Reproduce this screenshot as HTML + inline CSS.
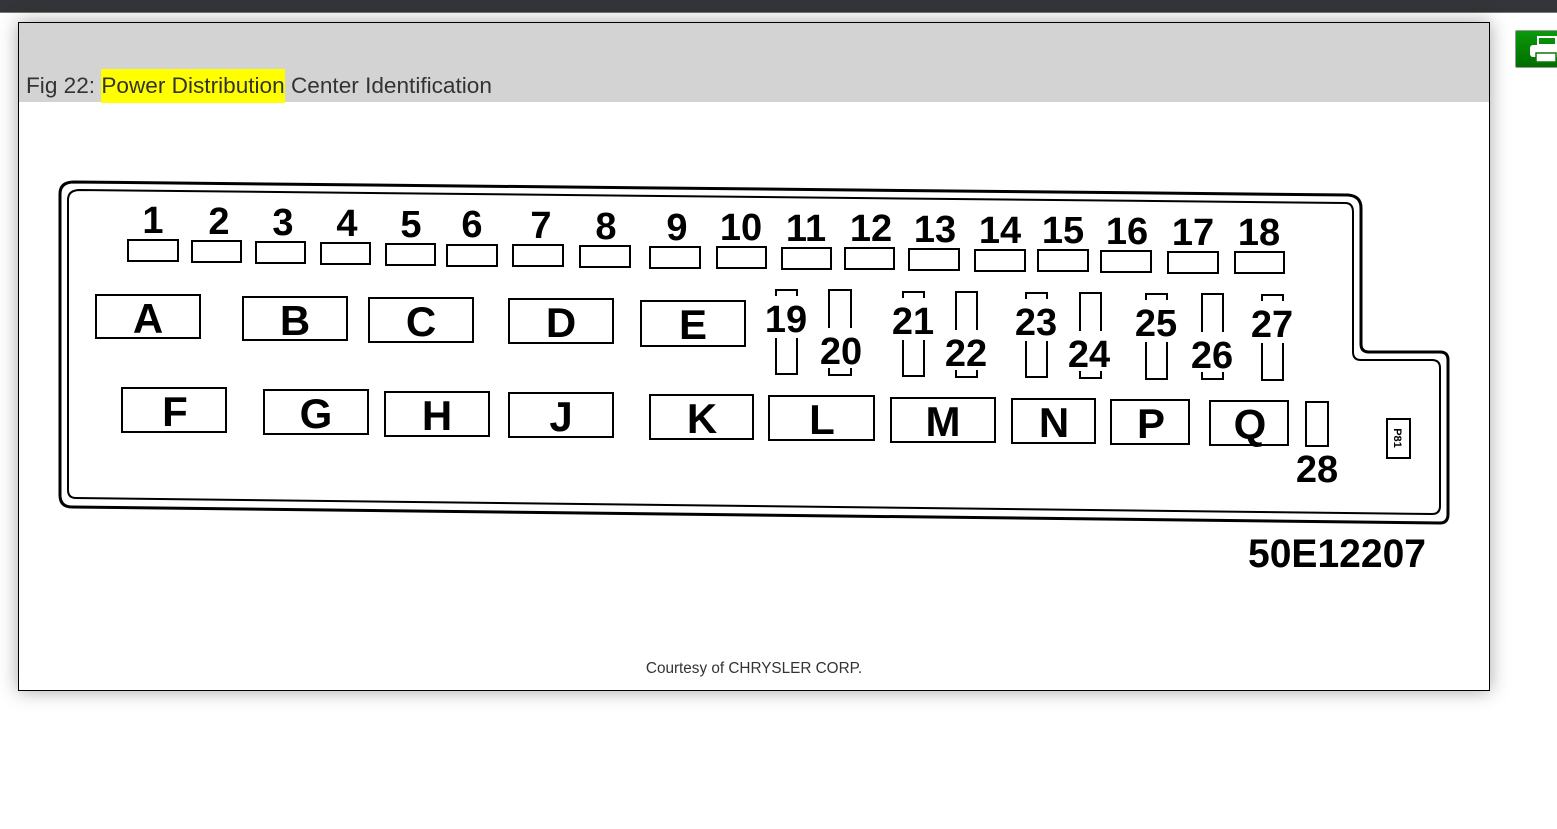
<!DOCTYPE html>
<html><head><meta charset="utf-8"><style>
html,body{margin:0;padding:0;width:1557px;height:829px;background:#fff;overflow:hidden;font-family:"Liberation Sans",sans-serif}
#top{position:absolute;left:0;top:0;width:1557px;height:12px;background:#333538;border-bottom:1px solid #777}
#panel{position:absolute;left:18px;top:22px;width:1470px;height:667px;border:1px solid #000;background:#fff;box-shadow:0 0 18px rgba(0,0,0,.35)}
#hdr{position:absolute;left:0;top:0;width:1470px;height:79px;background:#d3d3d3}
#title{position:absolute;left:7px;top:50px;font-size:22.6px;color:#333;white-space:nowrap;line-height:26px}
#title span{background:#ffff00;padding:4px 0 5px}
#cour{position:absolute;left:0;width:1470px;top:637px;text-align:center;font-size:15.3px;color:#333}
#print{position:absolute;left:1515px;top:30px;width:44px;height:36px;background:linear-gradient(#0a9a0a,#006d00);border:1px solid #999;border-radius:2px}
svg{position:absolute;left:0;top:0}
</style></head><body>
<div id="top"></div>
<div id="panel"><div id="hdr"></div>
<div id="title">Fig 22: <span>Power Distribution</span> Center Identification</div>
<div id="cour">Courtesy of CHRYSLER CORP.</div></div>
<div id="print"><svg width="44" height="36" style="position:absolute;left:0;top:0"><rect x="22" y="6" width="18" height="8" fill="none" stroke="#fff" stroke-width="2"/><rect x="14" y="14" width="30" height="12" rx="3" fill="#fff"/><rect x="20" y="22" width="20" height="9" fill="#fff" stroke="#0a7a0a" stroke-width="1.5"/></svg></div>
<svg width="1557" height="829" font-family="Liberation Sans" font-weight="bold" fill="#000">
<g fill="none" stroke="#000">
<path d="M74,182 L1348,195 Q1361,196 1361,208 L1361,344 Q1361,352 1369,352 L1440,352 Q1448,352 1448,360 L1448,514 Q1448,523 1440,523 L72,507 Q60,507 60,495 L60,194 Q60,182 74,182 Z" stroke-width="3"/>
<path d="M80,190 L1345,203 Q1353,203 1353,212 L1353,352 Q1353,360 1361,360 L1432,360 Q1440,360 1440,368 L1440,506 Q1440,514 1432,514 L76,498 Q68,498 68,490 L68,200 Q68,190 80,190 Z" stroke-width="2"/>
<g stroke-width="2">
<rect x="128" y="240" width="50" height="21"/><rect x="192" y="241" width="49" height="21"/><rect x="256" y="242" width="49" height="21"/><rect x="321" y="243" width="49" height="21"/><rect x="386" y="244" width="49" height="21"/><rect x="447" y="245" width="50" height="21"/><rect x="513" y="245" width="50" height="21"/><rect x="580" y="246" width="50" height="21"/><rect x="650" y="247" width="50" height="21"/><rect x="717" y="247" width="49" height="21"/><rect x="782" y="248" width="49" height="21"/><rect x="845" y="248" width="49" height="21"/><rect x="909" y="249" width="50" height="21"/><rect x="975" y="250" width="50" height="21"/><rect x="1038" y="250" width="50" height="21"/><rect x="1101" y="251" width="50" height="21"/><rect x="1168" y="252" width="50" height="21"/><rect x="1235" y="252" width="49" height="21"/>
<rect x="96" y="295" width="104" height="43"/><rect x="243" y="297" width="104" height="43"/><rect x="369" y="298" width="104" height="44"/><rect x="509" y="299" width="104" height="44"/><rect x="641" y="301" width="104" height="45"/>
<rect x="122" y="388" width="104" height="44"/><rect x="264" y="390" width="104" height="44"/><rect x="385" y="392" width="104" height="44"/><rect x="509" y="393" width="104" height="44"/><rect x="650" y="395" width="103" height="44"/><rect x="769" y="396" width="105" height="44"/><rect x="891" y="398" width="104" height="44"/><rect x="1012" y="399" width="83" height="44"/><rect x="1111" y="400" width="78" height="44"/><rect x="1210" y="401" width="78" height="44"/>
<rect x="1306" y="402" width="22" height="44"/><rect x="1387" y="419" width="23" height="39"/>
<path d="M776,296 V290 H797 V296 M776,338 V374 H797 V338"/>
<path d="M829,328 V290 H851 V328 M829,368 V375 H851 V368"/>
<path d="M903,298 V292 H924 V298 M903,340 V376 H924 V340"/>
<path d="M956,330 V292 H977 V330 M956,370 V377 H977 V370"/>
<path d="M1026,299 V293 H1047 V299 M1026,341 V377 H1047 V341"/>
<path d="M1080,331 V293 H1101 V331 M1080,371 V378 H1101 V371"/>
<path d="M1146,300 V294 H1167 V300 M1146,342 V379 H1167 V342"/>
<path d="M1202,332 V294 H1223 V332 M1202,372 V379 H1223 V372"/>
<path d="M1262,301 V295 H1283 V301 M1262,343 V380 H1283 V343"/>
</g></g>
<g font-size="38" text-anchor="middle">
<text x="153" y="233">1</text><text x="219" y="234">2</text><text x="283" y="235">3</text><text x="347" y="236">4</text><text x="411" y="237">5</text><text x="472" y="237">6</text><text x="541" y="238">7</text><text x="606" y="239">8</text><text x="677" y="240">9</text><text x="741" y="240">10</text><text x="806" y="241">11</text><text x="871" y="241">12</text><text x="935" y="242">13</text><text x="1000" y="243">14</text><text x="1063" y="243">15</text><text x="1127" y="244">16</text><text x="1193" y="245">17</text><text x="1259" y="245">18</text>
<text x="786" y="332">19</text><text x="841" y="364">20</text><text x="913" y="334">21</text><text x="966" y="366">22</text><text x="1036" y="335">23</text><text x="1089" y="367">24</text><text x="1156" y="336">25</text><text x="1212" y="368">26</text><text x="1272" y="337">27</text><text x="1317" y="482">28</text>
</g>
<g font-size="42" text-anchor="middle">
<text x="148" y="333">A</text><text x="295" y="335">B</text><text x="421" y="336">C</text><text x="561" y="337">D</text><text x="693" y="339">E</text>
<text x="175" y="426">F</text><text x="316" y="428">G</text><text x="437" y="430">H</text><text x="561" y="431">J</text><text x="702" y="433">K</text><text x="822" y="434">L</text><text x="943" y="436">M</text><text x="1054" y="437">N</text><text x="1151" y="438">P</text><text x="1250" y="439">Q</text>
</g>
<text x="1398" y="438" font-size="11" text-anchor="middle" transform="rotate(90 1398 438)" dy="4">P81</text>
<text x="1248" y="567" font-size="40" textLength="178" lengthAdjust="spacingAndGlyphs">50E12207</text>
</svg>
</body></html>
